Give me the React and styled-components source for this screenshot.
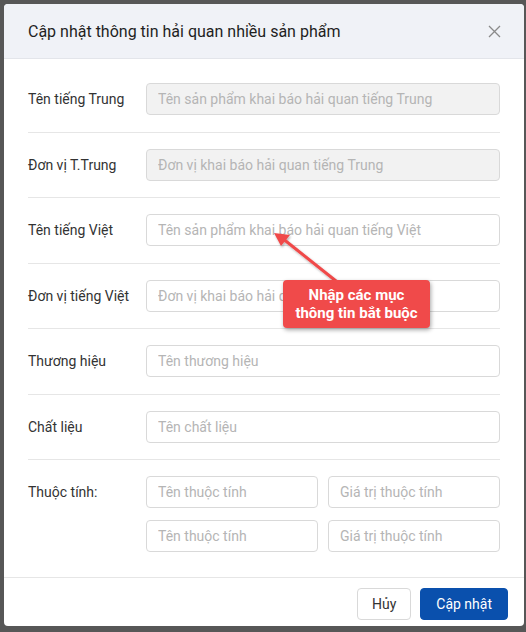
import React from "react";
import styled, { createGlobalStyle } from "styled-components";

const Global = createGlobalStyle`
  html, body { margin: 0; padding: 0; }
  body { font-family: Roboto, "Noto Sans", Arial, sans-serif; background: #585858; }
  * { box-sizing: border-box; }
`;

const Backdrop = styled.div`
  width: 526px;
  height: 632px;
  background: #575757;
  padding: 4px;
  overflow: hidden;
`;

const Modal = styled.div`
  position: relative;
  width: 520px;
  height: 622px;
  background: #fff;
  border-radius: 4px;
  display: flex;
  flex-direction: column;
  overflow: hidden;
`;

const Header = styled.div`
  height: 55px;
  flex: none;
  background: #f0f2f7;
  border-bottom: 1px solid #e3e5ea;
  display: flex;
  align-items: center;
  justify-content: space-between;
  padding: 0 20px 0 24px;
`;

const Title = styled.h2`
  margin: 0;
  font-size: 16px;
  font-weight: 400;
  color: #1f1f1f;
  letter-spacing: 0;
`;

const Close = styled.button`
  border: 0;
  background: transparent;
  padding: 0;
  width: 20px;
  height: 20px;
  display: flex;
  align-items: center;
  justify-content: center;
  cursor: pointer;
`;

const Body = styled.div`
  flex: 1;
  padding: 8px 24px 8px;
`;

const Row = styled.div`
  display: grid;
  grid-template-columns: 118px 1fr;
  align-items: ${(p) => (p.top ? "start" : "center")};
  padding: 16.25px 0;
  border-bottom: ${(p) => (p.last ? "0" : "1px solid #e6e6e6")};
`;

const Label = styled.div`
  font-size: 14px;
  color: #333;
  line-height: 32px;
`;

const Input = styled.input`
  width: 100%;
  height: 32px;
  border: 1px solid #d9d9d9;
  border-radius: 4px;
  padding: 0 11px;
  font-family: inherit;
  font-size: 14px;
  color: #333;
  background: ${(p) => (p.disabled ? "#f2f2f2" : "#fff")};
  outline: none;
  &::placeholder { color: #b5b5b5; }
`;

const AttrGrid = styled.div`
  display: grid;
  grid-template-columns: 1fr 1fr;
  column-gap: 10px;
  row-gap: 12px;
`;

const Footer = styled.div`
  flex: none;
  border-top: 1px solid #e6e6e6;
  display: flex;
  justify-content: flex-end;
  gap: 9px;
  padding: 10px 16px 7px;
`;

const Button = styled.button`
  height: 32px;
  padding: 0 ${(p) => (p.primary ? "15px" : "14px")};
  border-radius: 4px;
  font-family: inherit;
  font-size: 14px;
  border: 1px solid ${(p) => (p.primary ? "#0a50ad" : "#d9d9d9")};
  background: ${(p) => (p.primary ? "#0a50ad" : "#fff")};
  color: ${(p) => (p.primary ? "#fff" : "#333")};
  cursor: pointer;
`;

const Callout = styled.div`
  position: absolute;
  left: 279px;
  top: 276px;
  width: 147px;
  height: 48px;
  background: #f04a4a;
  border-radius: 4px;
  box-shadow: 1px 2px 4px rgba(0, 0, 0, 0.35);
  color: #fff;
  font-weight: 700;
  font-size: 15px;
  line-height: 18px;
  display: flex;
  align-items: center;
  justify-content: center;
  text-align: center;
`;

const Arrow = styled.svg`
  position: absolute;
  left: 262px;
  top: 222px;
  overflow: visible;
`;

export default function App() {
  return (
    <>
      <Global />
      <Backdrop>
        <Modal>
          <Header>
            <Title>Cập nhật thông tin hải quan nhiều sản phẩm</Title>
            <Close aria-label="close">
              <svg width="13" height="13" viewBox="0 0 13 13">
                <path d="M1 1L12 12M12 1L1 12" stroke="#8a8a8a" strokeWidth="1.3" />
              </svg>
            </Close>
          </Header>
          <Body>
            <Row>
              <Label>Tên tiếng Trung</Label>
              <Input disabled placeholder="Tên sản phẩm khai báo hải quan tiếng Trung" />
            </Row>
            <Row>
              <Label>Đơn vị T.Trung</Label>
              <Input disabled placeholder="Đơn vị khai báo hải quan tiếng Trung" />
            </Row>
            <Row>
              <Label>Tên tiếng Việt</Label>
              <Input placeholder="Tên sản phẩm khai báo hải quan tiếng Việt" />
            </Row>
            <Row>
              <Label>Đơn vị tiếng Việt</Label>
              <Input placeholder="Đơn vị khai báo hải quan tiếng Việt" />
            </Row>
            <Row>
              <Label>Thương hiệu</Label>
              <Input placeholder="Tên thương hiệu" />
            </Row>
            <Row>
              <Label>Chất liệu</Label>
              <Input placeholder="Tên chất liệu" />
            </Row>
            <Row top last>
              <Label>Thuộc tính:</Label>
              <AttrGrid>
                <Input placeholder="Tên thuộc tính" />
                <Input placeholder="Giá trị thuộc tính" />
                <Input placeholder="Tên thuộc tính" />
                <Input placeholder="Giá trị thuộc tính" />
              </AttrGrid>
            </Row>
          </Body>
          <Footer>
            <Button>Hủy</Button>
            <Button primary>Cập nhật</Button>
          </Footer>
          <Arrow width="80" height="60" viewBox="0 0 80 60">
            <defs>
              <filter id="sh" x="-20%" y="-20%" width="140%" height="140%">
                <feDropShadow dx="1" dy="1.5" stdDeviation="1" floodColor="#000" floodOpacity="0.3" />
              </filter>
            </defs>
            <g filter="url(#sh)">
              <line x1="70" y1="55" x2="16" y2="12" stroke="#f04a4a" strokeWidth="3" strokeLinecap="round" />
              <polygon points="8,7 24,9 15,20" fill="#f04a4a" />
            </g>
          </Arrow>
          <Callout>
            Nhập các mục
            <br />
            thông tin bắt buộc
          </Callout>
        </Modal>
      </Backdrop>
    </>
  );
}
